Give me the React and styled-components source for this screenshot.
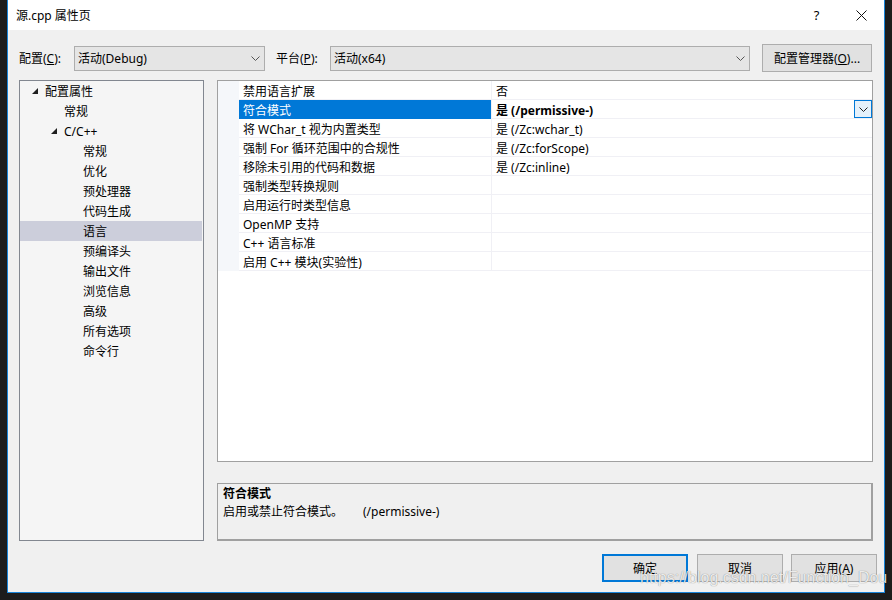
import React from 'react'
import styled, { createGlobalStyle } from 'styled-components'

const GlobalStyle = createGlobalStyle`
  html, body { margin: 0; padding: 0; background: #1c1c1c; }
  body {
    font-family: "Segoe UI", "Noto Sans", "Noto Sans CJK SC", sans-serif;
    font-size: 12px;
    color: #000;
  }
`

const Screen = styled.div`
  width: 892px;
  height: 600px;
  padding-left: 7px;
  box-sizing: border-box;
  position: relative;
  overflow: hidden;
`

const Dialog = styled.div`
  width: 878px;
  height: 593px;
  box-sizing: border-box;
  border: 1px solid #1883d7;
  border-top: none;
  background: #f0f0f0;
  display: flex;
  flex-direction: column;
`

const TitleBar = styled.div`
  height: 30px;
  background: #fff;
  display: flex;
  align-items: center;
  padding-left: 8px;
`

const Title = styled.div`
  flex: 1;
  font-size: 12px;
`

const CaptionButton = styled.div`
  width: 45px;
  height: 30px;
  display: flex;
  align-items: center;
  justify-content: center;
  font-size: ${p => (p.$small ? '13px' : '16px')};
`

const Toolbar = styled.div`
  display: flex;
  align-items: center;
  height: 28px;
  margin-top: 14px;
  padding: 0 11px;
`

const Label = styled.div`
  width: ${p => p.$w}px;
  margin-left: ${p => p.$ml || 0}px;
`

const Combo = styled.div`
  width: ${p => p.$w}px;
  height: 25px;
  box-sizing: border-box;
  border: 1px solid #adadad;
  background: #e5e5e5;
  display: flex;
  align-items: center;
  padding: 0 4px 0 3px;
`

const ComboText = styled.div`
  flex: 1;
`

const Button = styled.div`
  width: ${p => p.$w || 86}px;
  height: 28px;
  box-sizing: border-box;
  border: ${p => (p.$default ? '2px solid #0078d7' : '1px solid #adadad')};
  background: #e1e1e1;
  display: flex;
  align-items: center;
  justify-content: center;
  margin-left: ${p => p.$ml || 0}px;
`

const Main = styled.div`
  display: flex;
  margin-top: 8px;
  padding: 0 11px;
  height: 461px;
`

const Tree = styled.div`
  width: 185px;
  box-sizing: border-box;
  border: 1px solid #828790;
  background: #f5f5f5;
`

const TreeRow = styled.div`
  height: 20px;
  display: flex;
  align-items: center;
  margin-right: 1px;
  padding-left: ${p => p.$indent}px;
  background: ${p => (p.$selected ? '#cccedb' : 'transparent')};
`

const Twisty = styled.span`
  width: 13px;
  display: inline-flex;
  align-items: center;
`

const RightCol = styled.div`
  margin-left: 13px;
  flex: 1;
  display: flex;
  flex-direction: column;
`

const Grid = styled.div`
  height: 382px;
  box-sizing: border-box;
  border: 1px solid #a0a0a0;
  background: #fff;
  display: flex;
`

const Gutter = styled.div`
  width: 21px;
  height: 190px;
  background: #f5f7fa;
`

const Rows = styled.div`
  flex: 1;
`

const PropRow = styled.div`
  display: grid;
  grid-template-columns: 253px 1fr;
  height: 19px;
  box-sizing: border-box;
  border-bottom: 1px solid #f0f0f5;
`

const NameCell = styled.div`
  padding: 1px 0 0 4px;
  display: flex;
  align-items: center;
  background: ${p => (p.$selected ? '#0078d7' : 'transparent')};
  color: ${p => (p.$selected ? '#fff' : '#000')};
  border-right: 1px solid #f0f0f5;
`

const ValueCell = styled.div`
  padding: 1px 0 0 4px;
  display: flex;
  align-items: center;
  font-weight: ${p => (p.$bold ? 700 : 400)};
  position: relative;
`

const DropButton = styled.div`
  position: absolute;
  right: 0;
  top: 0;
  width: 18px;
  height: 18px;
  box-sizing: border-box;
  border: 1px solid #0078d7;
  background: #e5f1fb;
  display: flex;
  align-items: center;
  justify-content: center;
`

const Desc = styled.div`
  margin-top: 21px;
  height: 58px;
  box-sizing: border-box;
  border: 1px solid #a0a0a0;
  border-bottom-width: 2px;
  border-right-width: 2px;
  padding: 1px 5px;
  line-height: 18px;
`

const DescTitle = styled.div`
  font-weight: 700;
`

const Switch = styled.span`
  padding-left: 20px;
`

const Footer = styled.div`
  display: flex;
  justify-content: flex-end;
  margin-top: 13px;
  padding-right: 7px;
`

const Watermark = styled.div`
  position: absolute;
  left: 640px;
  top: 569px;
  font-family: "Liberation Sans", Arial, sans-serif;
  font-size: 16px;
  color: rgba(255, 255, 255, 0.85);
  text-shadow: 0 0 1px rgba(0, 0, 0, 0.35), 0 0 1px rgba(0, 0, 0, 0.2);
  white-space: nowrap;
  pointer-events: none;
`

const Chevron = ({ color = '#555' }) => (
  <svg width="9" height="5" viewBox="0 0 9 5">
    <path d="M0.5 0.5 L4.5 4.5 L8.5 0.5" fill="none" stroke={color} strokeWidth="1" />
  </svg>
)

const Triangle = () => (
  <svg width="6" height="6" viewBox="0 0 6 6">
    <path d="M6 0 L6 6 L0 6 Z" fill="#1e1e1e" />
  </svg>
)

const tree = [
  { text: '配置属性', indent: 12, open: true },
  { text: '常规', indent: 44 },
  { text: 'C/C++', indent: 31, open: true },
  { text: '常规', indent: 63 },
  { text: '优化', indent: 63 },
  { text: '预处理器', indent: 63 },
  { text: '代码生成', indent: 63 },
  { text: '语言', indent: 63, selected: true },
  { text: '预编译头', indent: 63 },
  { text: '输出文件', indent: 63 },
  { text: '浏览信息', indent: 63 },
  { text: '高级', indent: 63 },
  { text: '所有选项', indent: 63 },
  { text: '命令行', indent: 63 },
]

const props = [
  { name: '禁用语言扩展', value: '否' },
  { name: '符合模式', value: '是 (/permissive-)', selected: true },
  { name: '将 WChar_t 视为内置类型', value: '是 (/Zc:wchar_t)' },
  { name: '强制 For 循环范围中的合规性', value: '是 (/Zc:forScope)' },
  { name: '移除未引用的代码和数据', value: '是 (/Zc:inline)' },
  { name: '强制类型转换规则', value: '' },
  { name: '启用运行时类型信息', value: '' },
  { name: 'OpenMP 支持', value: '' },
  { name: 'C++ 语言标准', value: '' },
  { name: '启用 C++ 模块(实验性)', value: '' },
]

export default function App() {
  return (
    <Screen>
      <GlobalStyle />
      <Dialog>
        <TitleBar>
          <Title>源.cpp 属性页</Title>
          <CaptionButton $small>?</CaptionButton>
          <CaptionButton>
            <svg width="11" height="11" viewBox="0 0 11 11">
              <path d="M0.5 0.5 L10.5 10.5 M10.5 0.5 L0.5 10.5" stroke="#111" strokeWidth="1" />
            </svg>
          </CaptionButton>
        </TitleBar>

        <Toolbar>
          <Label $w={55}>配置(<u>C</u>):</Label>
          <Combo $w={191}>
            <ComboText>活动(Debug)</ComboText>
            <Chevron />
          </Combo>
          <Label $w={54} $ml={11}>平台(<u>P</u>):</Label>
          <Combo $w={420}>
            <ComboText>活动(x64)</ComboText>
            <Chevron />
          </Combo>
          <Button $w={110} $ml={12}>配置管理器(<u>O</u>)...</Button>
        </Toolbar>

        <Main>
          <Tree>
            {tree.map((t, i) => (
              <TreeRow key={i} $indent={t.indent} $selected={t.selected}>
                {t.open && (
                  <Twisty>
                    <Triangle />
                  </Twisty>
                )}
                {t.text}
              </TreeRow>
            ))}
          </Tree>

          <RightCol>
            <Grid>
              <Gutter />
              <Rows>
                {props.map((p, i) => (
                  <PropRow key={i}>
                    <NameCell $selected={p.selected}>{p.name}</NameCell>
                    <ValueCell $bold={p.selected}>
                      {p.value}
                      {p.selected && (
                        <DropButton>
                          <Chevron color="#222" />
                        </DropButton>
                      )}
                    </ValueCell>
                  </PropRow>
                ))}
              </Rows>
            </Grid>
            <Desc>
              <DescTitle>符合模式</DescTitle>
              <div>
                启用或禁止符合模式。<Switch>(/permissive-)</Switch>
              </div>
            </Desc>
          </RightCol>
        </Main>

        <Footer>
          <Button $default>确定</Button>
          <Button $ml={9}>取消</Button>
          <Button $ml={8}>应用(<u>A</u>)</Button>
        </Footer>
      </Dialog>
      <Watermark>https://blog.csdn.net/Function_Dou</Watermark>
    </Screen>
  )
}
